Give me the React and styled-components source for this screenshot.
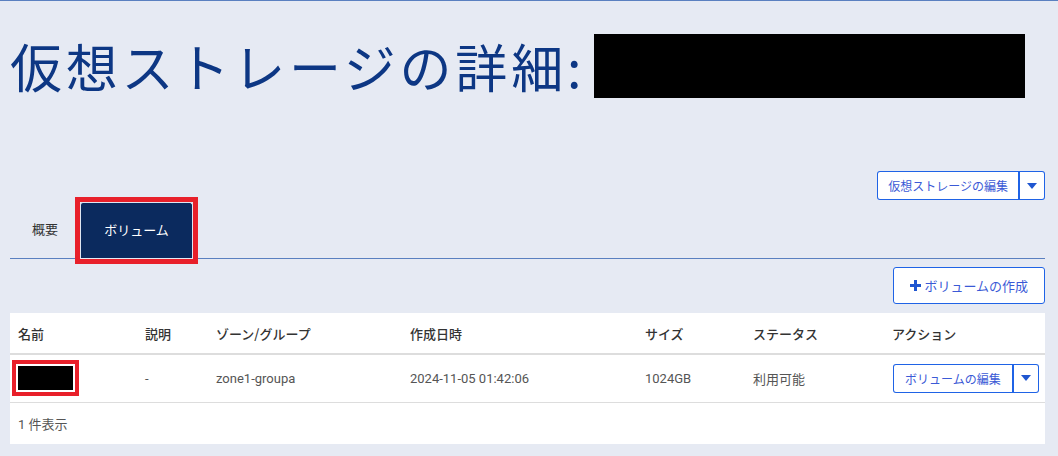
import React from 'react';
import styled, { createGlobalStyle } from 'styled-components';

const GlobalStyle = createGlobalStyle`
  html, body {
    margin: 0;
    padding: 0;
    background: #e6eaf3;
  }
  body {
    font-family: Roboto, "Noto Sans CJK JP", sans-serif;
    color: #333;
  }
`;

const Page = styled.div`
  border-top: 1px solid #5a80c0;
  padding: 0 13px 0 10px;
  min-height: 455px;
`;

const TitleRow = styled.div`
  display: flex;
  align-items: center;
  padding-top: 33px;
  height: 64px;
`;

const Title = styled.h1`
  margin: 0;
  font-family: "Noto Sans CJK JP", sans-serif;
  font-weight: 400;
  font-size: 52px;
  line-height: 64px;
  color: #0d3784;
  letter-spacing: 3.8px;
`;

const Redacted = styled.div`
  background: #000;
  width: ${(p) => p.w}px;
  height: ${(p) => p.h}px;
  margin-left: ${(p) => p.ml || 0}px;
`;

const Toolbar = styled.div`
  display: flex;
  justify-content: flex-end;
  margin-top: ${(p) => p.mt}px;
`;

const SplitButton = styled.div`
  display: flex;
  height: ${(p) => p.h || 29}px;
`;

const Button = styled.button`
  font-family: "Noto Sans CJK JP", Roboto, sans-serif;
  font-size: ${(p) => p.fs || 12}px;
  color: #3b5ad6;
  background: #fff;
  border: 1px solid #1f63e6;
  border-radius: 3px;
  padding: 0 ${(p) => p.px || 10}px;
  height: 100%;
  display: flex;
  align-items: center;
  gap: 3px;
  white-space: nowrap;
  cursor: pointer;
`;

const MainPart = styled(Button)`
  border-top-right-radius: 0;
  border-bottom-right-radius: 0;
  border-right: 2px solid #1f63e6;
`;

const CaretPart = styled(Button)`
  border-left: none;
  border-top-left-radius: 0;
  border-bottom-left-radius: 0;
  width: 25px;
  padding: 0;
  justify-content: center;
`;

const Tabs = styled.div`
  display: flex;
  align-items: flex-end;
  margin-top: -3px;
  border-bottom: 1px solid #5a80c0;
  height: 61px;
`;

const Tab = styled.div`
  font-family: "Noto Sans CJK JP", sans-serif;
  font-size: 13px;
  padding: 0 22px 20px;
  color: #333;
`;

const ActiveTabFrame = styled.div`
  border: 5px solid #e8202a;
  margin-bottom: -6px;
  margin-left: -5px;
`;

const ActiveTab = styled.div`
  background: #0b2a5e;
  color: #fff;
  font-family: "Noto Sans CJK JP", sans-serif;
  font-size: 13px;
  width: 113px;
  height: 57px;
  display: flex;
  align-items: center;
  justify-content: center;
  border: 1px solid #dfe6f2;
  border-bottom: 1px solid #e6eaf3;
  border-radius: 3px 3px 0 0;
  box-sizing: border-box;
  padding-bottom: 2px;
`;

const Panel = styled.div`
  background: #fff;
  margin-top: 9px;
`;

const Table = styled.table`
  width: 100%;
  border-collapse: collapse;
  table-layout: fixed;
  font-size: 13px;
`;

const Th = styled.th`
  box-sizing: border-box;
  text-align: left;
  font-family: "Noto Sans CJK JP", sans-serif;
  font-weight: 500;
  color: #333;
  height: 41px;
  padding: 0 0 0 8px;
  border-bottom: 2px solid #dddddd;
  width: ${(p) => (p.w ? `${p.w}px` : 'auto')};
`;

const Td = styled.td`
  box-sizing: border-box;
  font-family: Roboto, "Noto Sans CJK JP", sans-serif;
  color: #555;
  height: 48px;
  padding: 0 0 0 ${(p) => (p.pl === undefined ? 8 : p.pl)}px;
  border-bottom: 1px solid #dddddd;
  white-space: nowrap;
`;

const NameFrame = styled.div`
  display: inline-block;
  vertical-align: middle;
  border: 4px solid #e8202a;
  padding: 2px;
  background: #fff;
`;

const Footer = styled.div`
  font-family: Roboto, "Noto Sans CJK JP", sans-serif;
  font-size: 13px;
  color: #555;
  height: 41px;
  display: flex;
  align-items: center;
  padding-left: 8px;
`;

const Caret = () => (
  <svg width="10" height="6" viewBox="0 0 10 6">
    <path d="M0 0h10L5 6z" fill="#1f56d0" />
  </svg>
);

const Plus = () => (
  <svg width="11" height="11" viewBox="0 0 11 11">
    <path d="M4 0h3v4h4v3H7v4H4V7H0V4h4z" fill="#1f56d0" />
  </svg>
);

const App = () => {
  return (
    <>
      <GlobalStyle />
      <Page>
        <TitleRow>
          <Title>仮想ストレージの詳細:</Title>
          <Redacted w={431} h={64} ml={9} />
        </TitleRow>

        <Toolbar mt={73}>
          <SplitButton>
            <MainPart>仮想ストレージの編集</MainPart>
            <CaretPart>
              <Caret />
            </CaretPart>
          </SplitButton>
        </Toolbar>

        <Tabs>
          <Tab>概要</Tab>
          <ActiveTabFrame>
            <ActiveTab>ボリューム</ActiveTab>
          </ActiveTabFrame>
        </Tabs>

        <Toolbar mt={8}>
          <SplitButton h={37}>
            <Button fs={13} px={16}>
              <Plus />
              ボリュームの作成
            </Button>
          </SplitButton>
        </Toolbar>

        <Panel>
          <Table>
            <thead>
              <tr>
                <Th w={127}>名前</Th>
                <Th w={71}>説明</Th>
                <Th w={194}>ゾーン/グループ</Th>
                <Th w={235}>作成日時</Th>
                <Th w={108}>サイズ</Th>
                <Th w={139}>ステータス</Th>
                <Th>アクション</Th>
              </tr>
            </thead>
            <tbody>
              <tr>
                <Td pl={2}>
                  <NameFrame>
                    <Redacted w={55} h={24} />
                  </NameFrame>
                </Td>
                <Td>-</Td>
                <Td>zone1-groupa</Td>
                <Td>2024-11-05 01:42:06</Td>
                <Td>1024GB</Td>
                <Td>利用可能</Td>
                <Td pl={9}>
                  <SplitButton>
                    <MainPart px={11}>ボリュームの編集</MainPart>
                    <CaretPart>
                      <Caret />
                    </CaretPart>
                  </SplitButton>
                </Td>
              </tr>
            </tbody>
          </Table>
          <Footer>1 件表示</Footer>
        </Panel>
      </Page>
    </>
  );
};

export default App;
